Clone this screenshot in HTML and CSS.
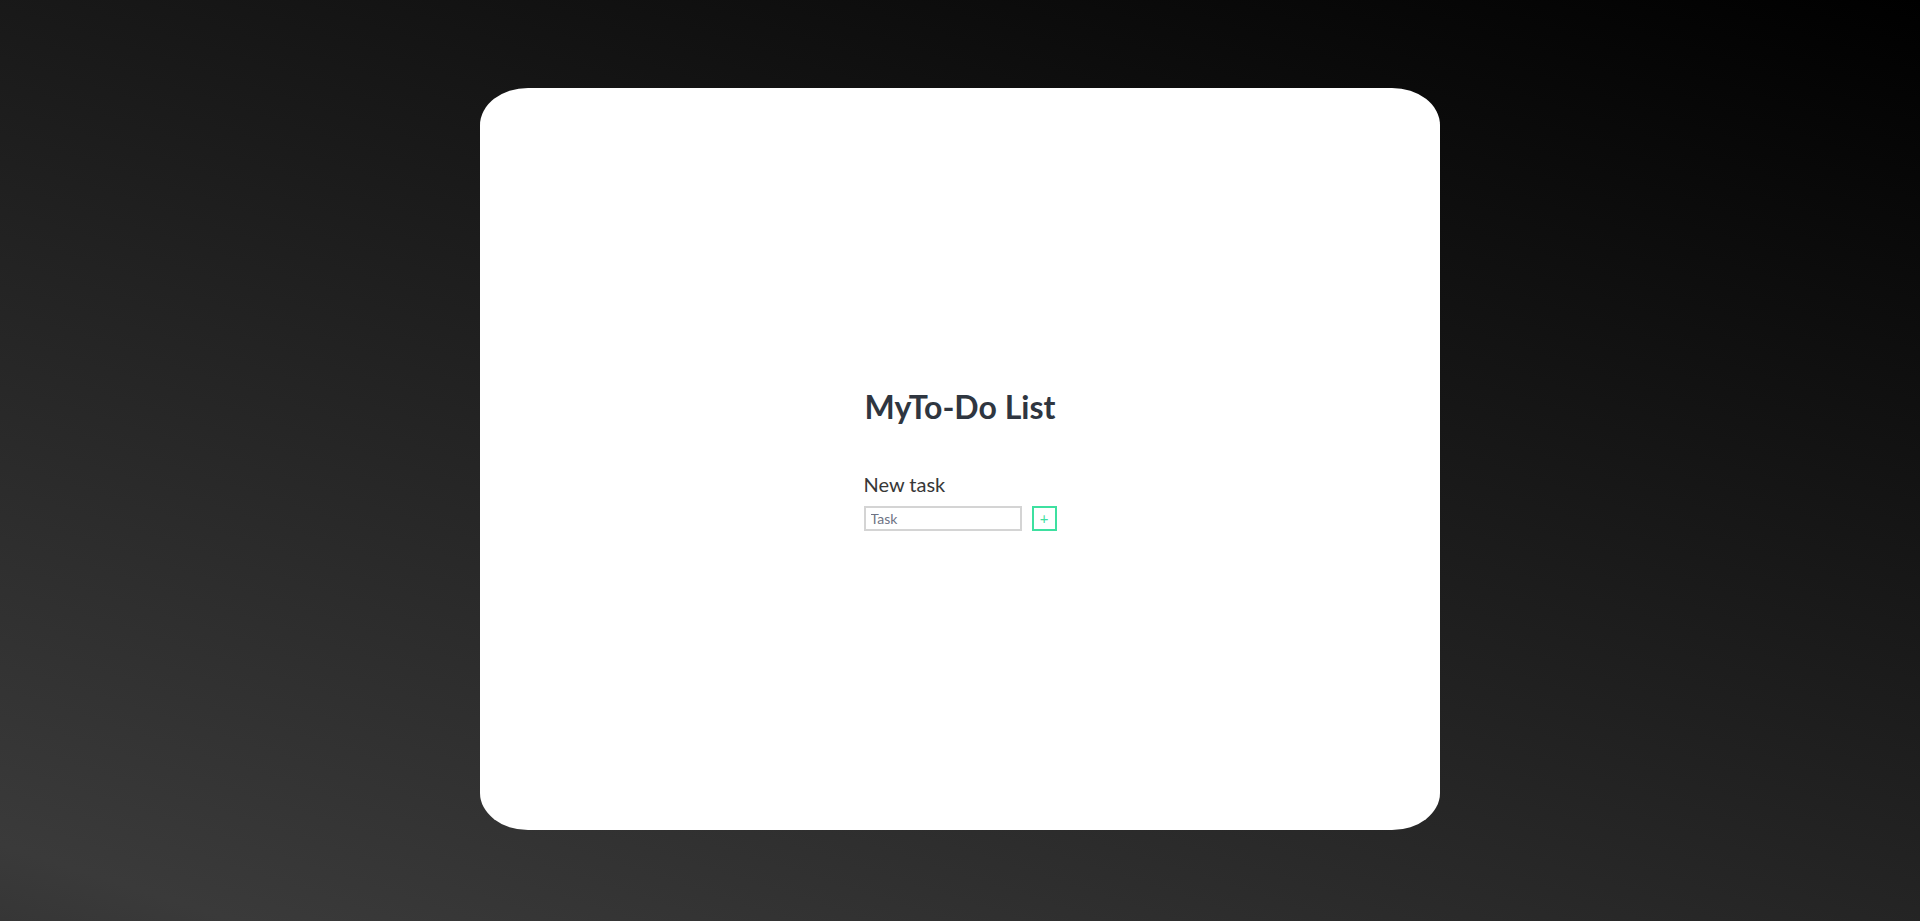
FILE: index.html
```html
<!DOCTYPE html>
<html lang="en">
<head>
<meta charset="utf-8">
<title>MyTo-Do List</title>
<link rel="stylesheet" href="styles.css">
</head>
<body>
  <main class="card">
    <div class="todo">
      <h1 class="title">MyTo-Do List</h1>
      <label class="label" for="task">New task</label>
      <div class="row">
        <input class="task-input" id="task" type="text" placeholder="Task">
        <button class="add-btn" type="button">+</button>
      </div>
    </div>
  </main>
</body>
</html>
```

FILE: styles.css
```css
html, body {
  margin: 0;
  padding: 0;
  height: 100%;
}

body {
  background: linear-gradient(18deg, #363636 0%, #3a3a3a 5%, #000000 100%);
  font-family: Lato, "Open Sans", sans-serif;
  overflow: hidden;
}

.card {
  box-sizing: border-box;
  width: 960px;
  height: 742px;
  margin: 88px auto 0;
  background: #ffffff;
  border-radius: 5%;
  display: flex;
  align-items: center;
  justify-content: center;
}

.todo {
  display: flex;
  flex-direction: column;
  align-items: flex-start;
}

.title {
  margin: 0 0 46px 1px;
  font-size: 32px;
  line-height: 38px;
  font-weight: 700;
  color: #2f3640;
}

.label {
  display: block;
  margin: 0 0 10px 0;
  font-size: 20px;
  line-height: 24px;
  font-weight: 400;
  color: #383838;
}

.row {
  display: flex;
  gap: 10px;
}

.task-input {
  box-sizing: border-box;
  width: 158px;
  height: 25px;
  margin: 0;
  padding: 0 5px;
  border: 2px solid #d4d4d4;
  border-radius: 0;
  font-family: Lato, sans-serif;
  font-size: 14px;
  color: #353b48;
  outline: none;
}

.task-input::placeholder {
  color: #6e7384;
}

.add-btn {
  box-sizing: border-box;
  width: 25px;
  height: 25px;
  margin: 0;
  padding: 0;
  border: 2px solid #3ee0a0;
  border-radius: 0;
  background: #ffffff;
  color: #3ee0a0;
  font-family: Lato, sans-serif;
  font-size: 15px;
  line-height: 21px;
  cursor: pointer;
}
```
